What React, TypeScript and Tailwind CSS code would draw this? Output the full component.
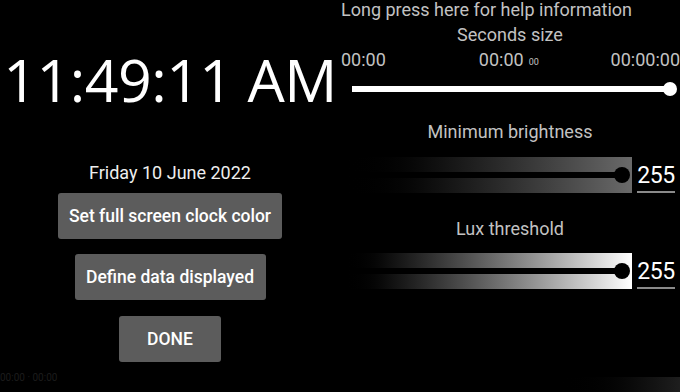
import React from "react";

const Bar = ({ gradient }: { gradient: string }) => (
  <div className="flex items-center h-[36px]">
    <div className={`relative w-[292px] h-[36px] ${gradient} flex items-center pl-[10px]`}>
      <div className="h-[6px] w-[272px] bg-black" />
      <div className="absolute left-[274px] top-[10px] w-[16px] h-[16px] rounded-full bg-black" />
    </div>
    <div className="ml-[5px] w-[38px] h-[36px] flex flex-col justify-end">
      <div className="text-[23px] leading-[30px] text-white text-center tracking-[-0.5px]">255</div>
      <div className="h-[2px] bg-[#8a8a8a]" />
    </div>
  </div>
);

export default function App() {
  return (
    <div
      className="w-[680px] h-[392px] bg-black flex overflow-hidden relative"
      style={{ fontFamily: "Roboto, 'Liberation Sans', sans-serif" }}
    >
      <div className="w-[340px] flex flex-col items-center">
        <div
          className="mt-[44px] text-[59px] leading-[70px] text-white tracking-[-0.5px] whitespace-nowrap"
          style={{ fontFamily: "'Open Sans', sans-serif" }}
        >
          11:49:11 AM
        </div>
        <div className="mt-[48px] text-[18px] leading-[22px] text-[#eeeeee]">Friday 10 June 2022</div>
        <div className="mt-[9px] w-[224px] h-[46px] bg-[#5c5c5c] rounded-[3px] flex items-center justify-center text-[17.5px] font-medium text-white whitespace-nowrap">
          Set full screen clock color
        </div>
        <div className="mt-[15px] w-[191px] h-[46px] bg-[#5c5c5c] rounded-[3px] flex items-center justify-center text-[17.5px] font-medium text-white whitespace-nowrap">
          Define data displayed
        </div>
        <div className="mt-[16px] w-[102px] h-[46px] bg-[#5c5c5c] rounded-[3px] flex items-center justify-center text-[17.5px] font-medium text-white">
          DONE
        </div>
        <div className="mt-[8px] self-start text-[10px] text-[#1c1c1c]">00:00 · 00:00</div>
      </div>
      <div className="w-[340px] flex flex-col text-[#c2c2c2]">
        <div className="text-[18px] leading-[20px] pl-[1px] whitespace-nowrap">Long press here for help information</div>
        <div className="mt-[5px] text-[18px] leading-[20px] text-center">Seconds size</div>
        <div className="mt-[5px] flex items-start text-[18px] leading-[20px] pl-[1px]">
          <span>00:00</span>
          <span className="ml-[93px]">
            00:00<span className="text-[9px] align-top ml-[5px] relative top-[2px]">00</span>
          </span>
          <span className="ml-auto">00:00:00</span>
        </div>
        <div className="relative mt-[16px] h-[6px] ml-[12px] w-[318px] bg-white">
          <div className="absolute right-[-7px] top-[-4px] w-[14px] h-[14px] rounded-full bg-white" />
        </div>
        <div className="mt-[30px] text-[18px] leading-[20px] text-center">Minimum brightness</div>
        <div className="mt-[15px]">
          <Bar gradient="bg-gradient-to-r from-black to-[#6a6a6a]" />
        </div>
        <div className="mt-[26px] text-[18px] leading-[20px] text-center">Lux threshold</div>
        <div className="mt-[14px]">
          <Bar gradient="bg-gradient-to-r from-black to-white" />
        </div>
        <div className="mt-[88px] ml-[215px] h-[15px] w-[125px] bg-gradient-to-r from-black to-[#1e1e1e]" />
      </div>
    </div>
  );
}
